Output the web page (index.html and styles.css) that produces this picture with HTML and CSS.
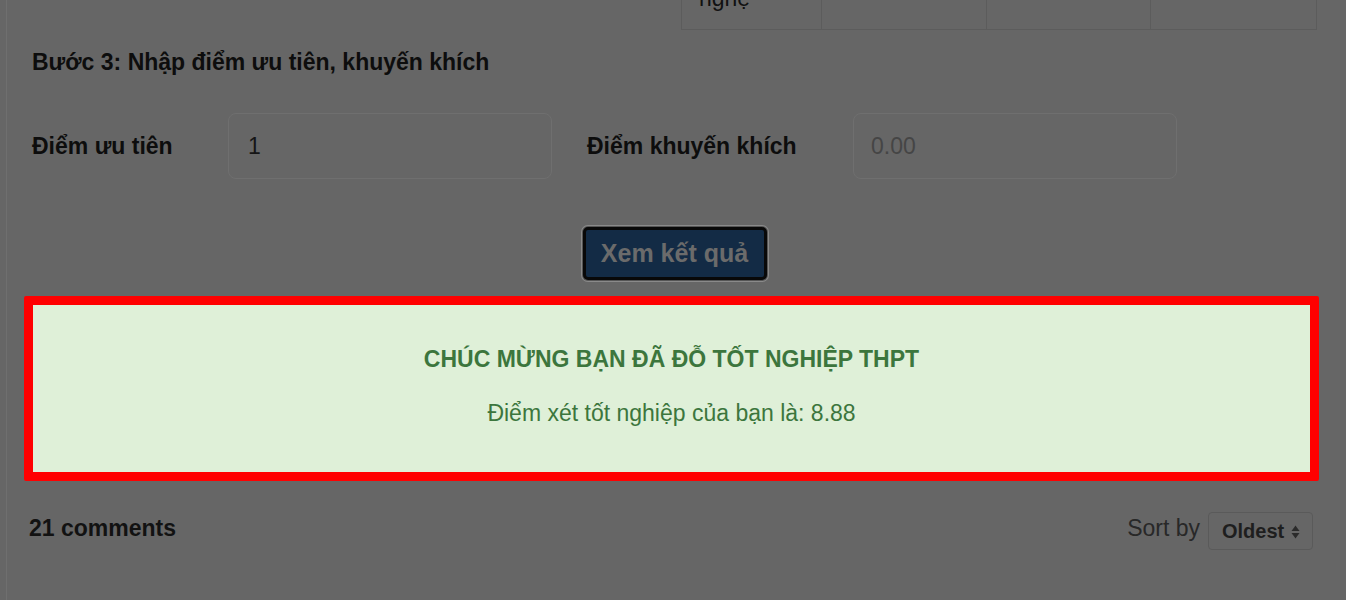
FILE: index.html
```html
<!DOCTYPE html>
<html lang="vi">
<head>
<meta charset="utf-8">
<title>Tính điểm tốt nghiệp</title>
<link rel="stylesheet" href="styles.css">
</head>
<body>
<div class="page">
  <div class="content">
    <div class="table-clip">
      <table class="scores">
        <tr>
          <td class="c1">Công<br>nghệ</td>
          <td class="c2"></td>
          <td class="c3"></td>
          <td class="c4"></td>
        </tr>
      </table>
    </div>

    <h3 class="step">Bước 3: Nhập điểm ưu tiên, khuyến khích</h3>

    <div class="form-row">
      <label class="lbl lbl1">Điểm ưu tiên</label>
      <div class="field">1</div>
      <label class="lbl lbl2">Điểm khuyến khích</label>
      <div class="field placeholder">0.00</div>
    </div>

    <div class="btn-row">
      <button class="btn">Xem kết quả</button>
    </div>

    <div class="result">
      <h4 class="result-title">CHÚC MỪNG BẠN ĐÃ ĐỖ TỐT NGHIỆP THPT</h4>
      <p class="result-text">Điểm xét tốt nghiệp của bạn là: 8.88</p>
    </div>

    <div class="comments-bar">
      <div class="count">21 comments</div>
      <div class="sort">
        <span class="sort-label">Sort by</span>
        <div class="select">
          <span>Oldest</span>
          <svg class="arrows" width="9" height="14" viewBox="0 0 9 14"><path d="M4.5 0.5 L8.5 6 L0.5 6 Z" fill="#2b2b2b"/><path d="M4.5 13.5 L8.5 8 L0.5 8 Z" fill="#2b2b2b"/></svg>
        </div>
      </div>
    </div>
  </div>
</div>
</body>
</html>
```

FILE: styles.css
```css
html, body {
  margin: 0;
  padding: 0;
  background: #666666;
  font-family: "Liberation Sans", Arial, sans-serif;
  color: #111111;
}

.page {
  padding-left: 6px;
  height: 600px;
  overflow: hidden;
}

.content {
  border-left: 1px solid #6f6f6f;
  padding: 0 29px 0 25px;
  min-height: 600px;
}

.table-clip {
  height: 30px;
  overflow: hidden;
  display: flex;
  align-items: flex-end;
  justify-content: flex-end;
}

.scores {
  border-collapse: collapse;
  font-size: 23px;
  line-height: 30px;
  flex: none;
}

.scores td {
  border: 1px solid #5c5c5c;
  padding: 18px 17px 16px;
  vertical-align: middle;
}

.scores .c1 { width: 105px; }
.scores .c2 { width: 130px; }
.scores .c3 { width: 129px; }
.scores .c4 { width: 131px; }

.step {
  margin: 17px 0 0;
  font-size: 23px;
  line-height: 30px;
  font-weight: bold;
  color: #0d0d0d;
}

.form-row {
  display: flex;
  align-items: center;
  margin-top: 36px;
  height: 66px;
}

.lbl {
  font-size: 23px;
  font-weight: bold;
  color: #0d0d0d;
  flex: none;
}

.lbl1 { width: 196px; }
.lbl2 { width: 266px; margin-left: 35px; }

.field {
  box-sizing: border-box;
  width: 324px;
  height: 66px;
  border: 1px solid #6f6f6f;
  border-radius: 8px;
  padding: 0 19px;
  display: flex;
  align-items: center;
  font-size: 23px;
  color: #151515;
  flex: none;
}

.field.placeholder {
  color: #454545;
  padding-left: 17px;
}

.btn-row {
  display: flex;
  justify-content: center;
  margin-top: 48px;
}

.btn {
  box-sizing: border-box;
  width: 184px;
  height: 53px;
  border: 3px solid #080808;
  border-radius: 5px;
  background: #132b45;
  color: #6b6b6b;
  font-family: "Liberation Sans", Arial, sans-serif;
  font-weight: bold;
  font-size: 25px;
  padding: 0;
  box-shadow: 0 0 0 1px #555555, 0 0 0 2px #8a8a8a;
}

.result {
  margin: 16px -2px 0 -8px;
  border: 9px solid #ff0000;
  border-radius: 2px;
  background: #dff0d8;
  color: #3c763d;
  text-align: center;
  padding: 39px 0 44px;
}

.result-title {
  margin: 0;
  font-size: 23px;
  line-height: 30px;
  font-weight: bold;
}

.result-text {
  margin: 24px 0 0;
  font-size: 23px;
  line-height: 30px;
}

.comments-bar {
  display: flex;
  justify-content: space-between;
  align-items: center;
  margin: 31px 4px 0 -3px;
}

.count {
  font-size: 23px;
  font-weight: bold;
  color: #121212;
  margin-top: -6px;
}

.sort {
  display: flex;
  align-items: center;
  gap: 8px;
}

.sort-label {
  font-size: 23px;
  color: #282828;
  margin-top: -6px;
}

.select {
  box-sizing: border-box;
  width: 105px;
  height: 38px;
  border: 1px solid #5a5a5a;
  border-radius: 4px;
  display: flex;
  align-items: center;
  padding: 0 0 0 13px;
  font-size: 20px;
  font-weight: bold;
  color: #1e1e1e;
  gap: 7px;
}

.arrows {
  display: block;
  margin-top: 1px;
}
```
